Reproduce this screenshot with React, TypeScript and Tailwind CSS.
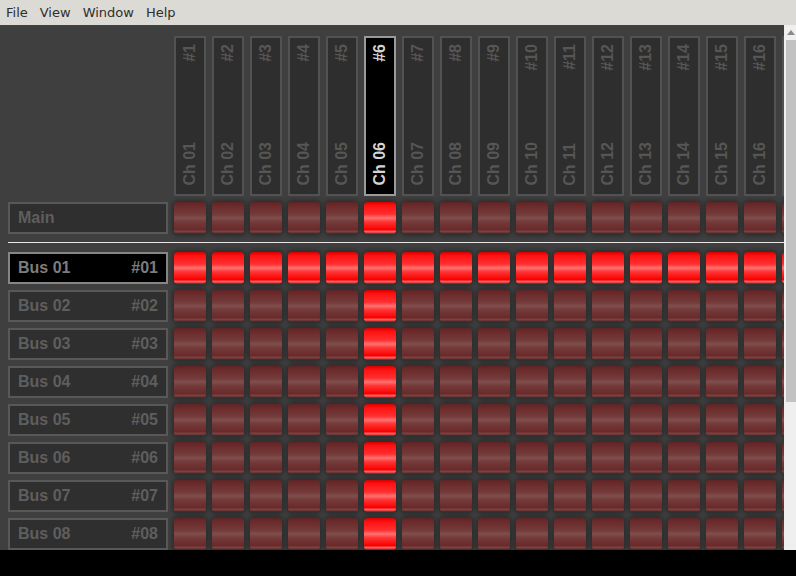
import React from 'react'

const cols = Array.from({ length: 17 }, (_, i) => i + 1)
const buses = Array.from({ length: 8 }, (_, i) => i + 1)
const pad = (n: number) => String(n).padStart(2, '0')

const onBtn =
  'bg-[linear-gradient(to_bottom,#d80000_0%,#ff1212_12%,#ff3030_38%,#ff7272_50%,#ff3434_62%,#f80000_86%,#ff6a6a_93%,#a80000_100%)]'
const offBtn =
  'bg-[linear-gradient(to_bottom,#602424_0%,#6c2c2c_14%,#743a3a_38%,#804e4e_50%,#743a3a_62%,#6a2a2a_86%,#7c4444_93%,#4a1c1c_100%)]'

function Pad({ on }: { on: boolean }) {
  return (
    <div
      className={`w-[32px] h-[32px] shrink-0 rounded-[4px] shadow-[0_0_4px_2px_rgba(0,0,0,0.3)] ${on ? onBtn : offBtn}`}
    />
  )
}

function Label({ name, tag, selected }: { name: string; tag?: string; selected?: boolean }) {
  return (
    <div
      className={`w-[160px] h-[32px] shrink-0 border-2 flex items-center justify-between px-[8px] text-[16px] font-bold ${
        selected ? 'bg-black border-[#858585] text-[#7c7c7c]' : 'bg-[#2f2f2f] border-[#585858] text-[#5e5e5e]'
      }`}
    >
      <span>{name}</span>
      {tag && <span>{tag}</span>}
    </div>
  )
}

export default function App() {
  return (
    <div className="w-[796px] h-[576px] bg-black flex flex-col overflow-hidden font-['Liberation_Sans',Arial,sans-serif]">
      {/* Menu bar */}
      <div className="h-[25px] shrink-0 bg-[#dcdad5] flex items-center font-['DejaVu_Sans',sans-serif] text-[13px] text-[#2e2e2e]">
        {['File', 'View', 'Window', 'Help'].map((m) => (
          <span key={m} className="px-[6px]">
            {m}
          </span>
        ))}
      </div>

      <div className="h-[525px] shrink-0 flex">
        {/* Matrix */}
        <div className="flex-1 overflow-hidden bg-[#3f3f3f] pt-[11px]">
          {/* Channel headers */}
          <div className="flex gap-[6px] pl-[174px]">
            {cols.map((c) => {
              const sel = c === 6
              return (
                <div
                  key={c}
                  className={`w-[32px] h-[160px] shrink-0 border-2 flex flex-col items-center justify-between pt-[6px] pb-[8px] text-[16px] font-bold leading-[20px] ${
                    sel ? 'bg-black border-[#9a9a9a] text-[#d4d4d4]' : 'bg-[#2e2e2e] border-[#525252] text-[#565656]'
                  }`}
                >
                  {/* the 17th strip is clipped by the window edge */}
                  {c < 17 && (
                    <>
                      <span className="[writing-mode:vertical-rl] rotate-180">#{c}</span>
                      <span className="[writing-mode:vertical-rl] rotate-180">Ch {pad(c)}</span>
                    </>
                  )}
                </div>
              )
            })}
          </div>

          {/* Main row */}
          <div className="flex gap-[6px] pl-[8px] mt-[6px]">
            <Label name="Main" />
            {cols.map((c) => (
              <Pad key={c} on={c === 6} />
            ))}
          </div>

          <div className="ml-[8px] mt-[8px] h-px bg-[#e6e6e6]" />

          {/* Bus rows */}
          <div className="flex flex-col gap-[6px] mt-[9px]">
            {buses.map((b) => (
              <div key={b} className="flex gap-[6px] pl-[8px]">
                <Label name={`Bus ${pad(b)}`} tag={`#${pad(b)}`} selected={b === 1} />
                {cols.map((c) => (
                  <Pad key={c} on={b === 1 || c === 6} />
                ))}
              </div>
            ))}
          </div>
        </div>

        {/* Scrollbar */}
        <div className="w-[12px] shrink-0 bg-[#efefef] flex flex-col">
          <div className="h-[15px] flex items-center justify-center pl-[2px]">
            <svg width="8" height="5" viewBox="0 0 8 5">
              <path d="M0 5 L4 0 L8 5 Z" fill="#8a8a8a" />
            </svg>
          </div>
          <div className="ml-[2px] h-[362px] bg-[#c2c2c2]" />
        </div>
      </div>
    </div>
  )
}
